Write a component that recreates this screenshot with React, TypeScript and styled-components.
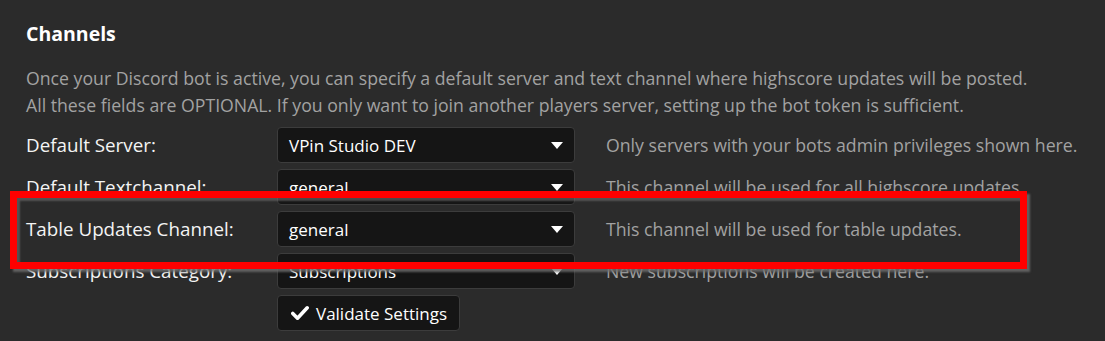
import styled, { createGlobalStyle } from "styled-components"

const Global = createGlobalStyle`
    body {
        margin: 0;
        background: #2b2b2b;
        font-family: "Open Sans", "Noto Sans", sans-serif;
    }
`

const rows = [
    { label: "Default Server:", value: "VPin Studio DEV", help: "Only servers with your bots admin privileges shown here." },
    { label: "Default Textchannel:", value: "general", help: "This channel will be used for all highscore updates." },
    { label: "Table Updates Channel:", value: "general", help: "This channel will be used for table updates." },
    { label: "Subscriptions Category:", value: "Subscriptions", help: "New subscriptions will be created here." },
]

export default function App() {
    return (
        <>
            <Global />
            <Page>
                <Title>Channels</Title>
                <Description>
                    Once your Discord bot is active, you can specify a default server and text channel where highscore updates will be posted.
                    <br />
                    All these fields are OPTIONAL. If you only want to join another players server, setting up the bot token is sufficient.
                </Description>
                <Form>
                    {rows.map((r) => (
                        <Row key={r.label}>
                            <Label>{r.label}</Label>
                            <Combo>
                                <span>{r.value}</span>
                                <Arrow />
                            </Combo>
                            <Help>{r.help}</Help>
                        </Row>
                    ))}
                    <Row>
                        <span />
                        <Button>
                            <svg width="18" height="16" viewBox="0 0 18 16">
                                <path d="M1.8 8.5 L6.5 13.2 L16.2 2.8" fill="none" stroke="#fff" strokeWidth="3.6" strokeLinecap="round" strokeLinejoin="round" />
                            </svg>
                            Validate Settings
                        </Button>
                        <span />
                    </Row>
                </Form>
                <Highlight />
            </Page>
        </>
    )
}

const Page = styled.div`
    position: relative;
    width: 1105px;
    height: 341px;
    box-sizing: border-box;
    padding: 22px 26px 0;
    overflow: hidden;
`

const Title = styled.h2`
    margin: 0;
    font-size: 19.5px;
    font-weight: 700;
    color: #ffffff;
    line-height: 24px;
`

const Description = styled.p`
    margin: 19px 0 0;
    font-size: 17.7px;
    line-height: 26.5px;
    color: #a2a2a2;
    white-space: nowrap;
`

const Form = styled.div`
    margin-top: 9px;
    display: flex;
    flex-direction: column;
    gap: 6px;
`

const Row = styled.div`
    display: grid;
    grid-template-columns: 220px 298px 1fr;
    column-gap: 31px;
    align-items: center;
    height: 36px;
`

const Label = styled.span`
    font-size: 18.8px;
    color: #f4f4f4;
    white-space: nowrap;
`

const Combo = styled.div`
    height: 36px;
    box-sizing: border-box;
    display: flex;
    align-items: center;
    justify-content: space-between;
    padding: 0 11px 0 11px;
    background: #151515;
    border: 1px solid #3c3c3c;
    border-radius: 4px;
    color: #ffffff;
    font-size: 17px;
`

const Arrow = styled.i`
    width: 0;
    height: 0;
    border-left: 6px solid transparent;
    border-right: 6px solid transparent;
    border-top: 7px solid #ffffff;
`

const Help = styled.span`
    font-size: 17.7px;
    color: #a2a2a2;
    white-space: nowrap;
`

const Button = styled.button`
    justify-self: start;
    height: 36px;
    display: flex;
    align-items: center;
    gap: 7px;
    padding: 0 12px 0 13px;
    background: #151515;
    border: 1px solid #3c3c3c;
    border-radius: 4px;
    color: #ffffff;
    font-family: inherit;
    font-size: 17px;
`

const Highlight = styled.div`
    position: absolute;
    left: 10px;
    top: 191px;
    width: 1017px;
    height: 78px;
    box-sizing: border-box;
    border: 7px solid #ff0000;
    box-shadow: 3px 3px 2px rgba(110, 110, 110, 0.8), inset 3px 3px 2px rgba(110, 110, 110, 0.6);
    pointer-events: none;
`
